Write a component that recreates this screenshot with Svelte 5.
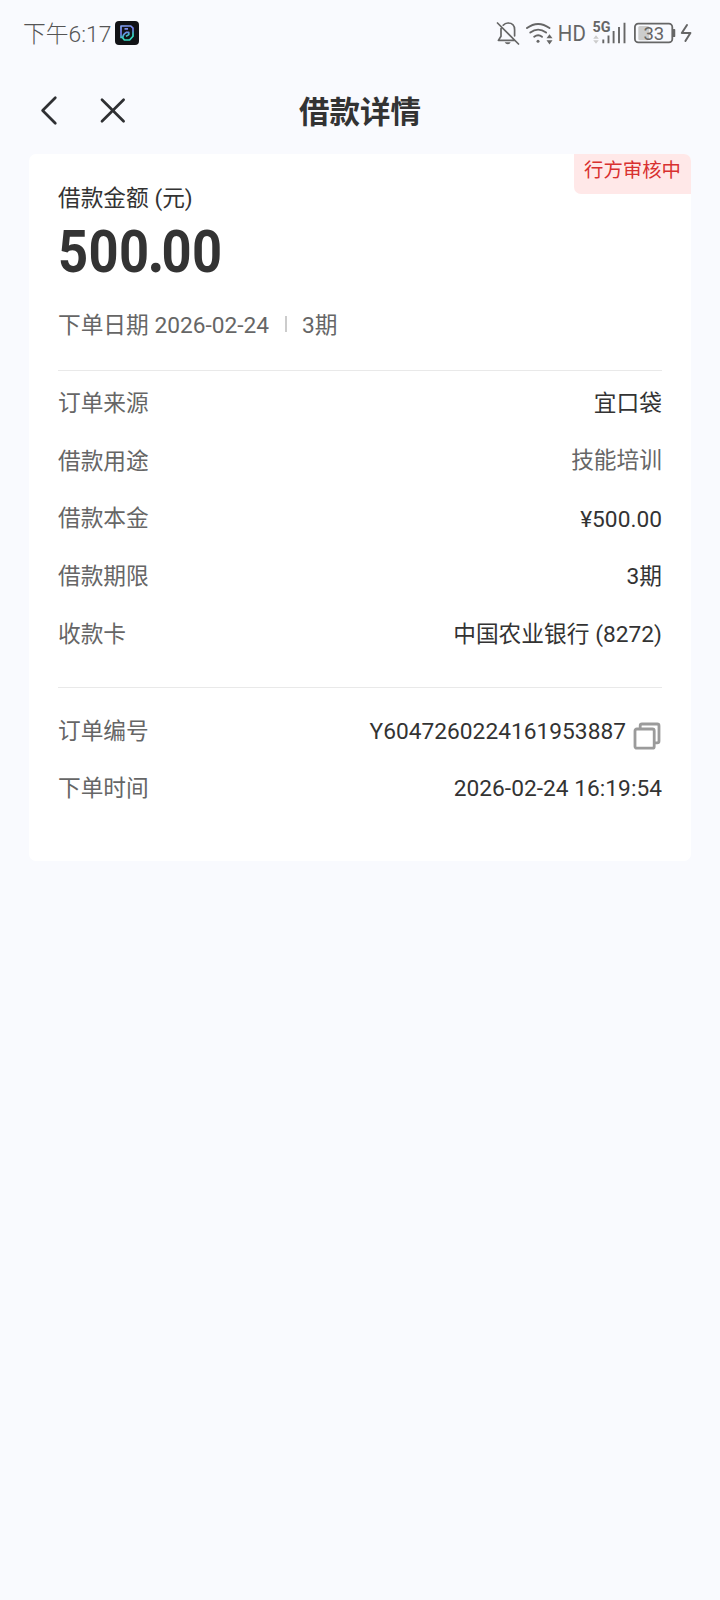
<script>
  const loan = [
    { label: '订单来源', value: '宜口袋' },
    { label: '借款用途', value: '技能培训', muted: true },
    { label: '借款本金', value: '¥500.00' },
    { label: '借款期限', value: '3期' },
    { label: '收款卡', value: '中国农业银行 (8272)' }
  ];
  const order = [
    { label: '订单编号', value: 'Y6047260224161953887', copy: true },
    { label: '下单时间', value: '2026-02-24 16:19:54' }
  ];
</script>

{#snippet row(item)}
  <div class="row">
    <span class="label">{item.label}</span>
    <span class="value" class:muted={item.muted}>
      <span>{item.value}</span>
      {#if item.copy}
        <svg class="copy" width="28" height="28" viewBox="0 0 28 28" fill="none" stroke="#9b9b9b" stroke-width="2.8">
          <rect x="2" y="7" width="19.2" height="19.2" rx="1.8" />
          <path d="M7.2 7V3.8A1.8 1.8 0 0 1 9 2h15.2A1.8 1.8 0 0 1 26 3.8V19a1.8 1.8 0 0 1-1.8 1.8h-3" />
        </svg>
      {/if}
    </span>
  </div>
{/snippet}

<div class="screen">
  <div class="status">
    <span class="clock">下午6:17</span>
    <svg class="app" width="24" height="24" viewBox="0 0 24 24">
      <defs>
        <linearGradient id="glow" x1="0" y1="0" x2="0.3" y2="1">
          <stop offset="0" stop-color="#84a4f4" />
          <stop offset="0.5" stop-color="#727de8" />
          <stop offset="0.85" stop-color="#35d9c0" />
        </linearGradient>
      </defs>
      <rect width="24" height="24" rx="4" fill="#121316" />
      <path d="M7.4 16.4H6V5h9.8l2.2 2.2v8L14.6 19H9.4l-1.6-2q0-3.8 3.4-5.6h2.6v2.2L11 15.4M9.5 7.8H13" fill="none" stroke="url(#glow)" stroke-width="1.7" stroke-linejoin="round" />
    </svg>
    <svg class="system" width="200" height="32" viewBox="0 -2 200 32" fill="none" stroke="#666" stroke-width="1.7" stroke-linecap="round" stroke-linejoin="round">
      <path d="M1.5 3 22.5 24M7.2 5.2Q9 3 12 3c4.2 0 6.6 2.8 6.6 6.8v6M5 8.5v7.8L2.4 20.4H18" />
      <path d="M8.7 22.3h6q-1 2-3 2t-3-2z" fill="#666" stroke="none" />
      <path d="M31 8.1q11-8.2 22.5 0M34.3 12.6q7.8-6 15.8 0M38.2 16.8q4-3 7.8 0" stroke-width="1.9" />
      <circle cx="42" cy="21.2" r="1.5" fill="#666" stroke="none" />
      <path d="M53.5 14.2 56.5 18.2h-6zM53.5 24.4 56.5 20.2h-6z" fill="#666" stroke="none" />
      <text class="hd" x="61.8" y="21" textLength="28" lengthAdjust="spacingAndGlyphs">HD</text>
      <text class="net" x="96.5" y="12" textLength="18" lengthAdjust="spacingAndGlyphs">5G</text>
      <path d="M100 15.2l2.8 3.6h-5.6zM100 23.8l2.8-3.6h-5.6z" fill="#ccc" stroke="none" />
      <path d="M107.3 19.5v3.8M112.5 15.5v7.8M117.6 11v12.3M123 7v16.3M128.5 2.7v20.6" stroke-width="1.9" stroke-linecap="butt" />
      <rect x="142.3" y="6" width="11" height="14.2" rx="1.5" fill="#ccc" stroke="none" />
      <rect x="138.9" y="3.7" width="37.4" height="18.6" rx="3.4" stroke-width="1.8" />
      <path d="M177.5 9.8h.9v6.4h-.9z" fill="#666" />
      <text class="charge" x="157.8" y="19.6" text-anchor="middle">33</text>
      <path d="M191 5 185.8 13h8.6L189.4 21" stroke-width="2" />
    </svg>
  </div>

  <header>
    <svg width="90" height="32" viewBox="0 0 90 32" fill="none" stroke="#2f3033" stroke-width="2.7" stroke-linecap="round" stroke-linejoin="round">
      <path d="M16.3 2.8 3.6 15.5 16.3 28.2M63 4.7 84.6 26.3M84.6 4.7 63 26.3" />
    </svg>
    <h1>借款详情</h1>
  </header>

  <main>
    <div class="badge">行方审核中</div>
    <div class="caption">借款金额 (元)</div>
    <div class="amount"><span>500<b>.</b>00</span></div>
    <div class="meta"><span>下单日期 2026-02-24</span><i></i><span>3期</span></div>
    <section class="loan">
      {#each loan as item}{@render row(item)}{/each}
    </section>
    <section class="order">
      {#each order as item}{@render row(item)}{/each}
    </section>
  </main>
</div>

<style>
  :global(body) { background: #f9fafe; }
  .screen {
    width: 720px;
    height: 1600px;
    background: #f9fafe;
    font-family: Roboto, "Noto Sans CJK SC", sans-serif;
    color: #333;
    overflow: hidden;
  }
  .status {
    display: flex;
    align-items: center;
    height: 68px;
    padding: 0 24px 0 23px;
  }
  .clock {
    width: 92px;
    margin-top: 2px;
    font: 300 22.8px/30px Roboto, "Noto Sans CJK SC", sans-serif;
    color: #555;
    white-space: nowrap;
  }
  .app { margin-top: -2px; }
  .system { margin-left: auto; overflow: visible; }
  .system text { font-family: Roboto, sans-serif; fill: #666; stroke: none; }
  .system .hd { font-size: 22px; font-weight: 400; }
  .system .net { font-size: 14.6px; font-weight: 700; }
  .system .charge { font-size: 18.5px; }
  header {
    display: grid;
    grid-template-columns: 90px 1fr 90px;
    align-items: center;
    height: 86px;
    padding: 0 39px;
    box-sizing: border-box;
  }
  h1 {
    margin: -2px 0 0;
    text-align: center;
    font: 700 30.5px/40px "Noto Sans CJK SC", sans-serif;
  }
  main {
    position: relative;
    box-sizing: border-box;
    width: 662px;
    height: 707px;
    margin-left: 29px;
    padding: 29px 29px 0;
    border-radius: 7px;
    background: #fff;
    font-size: 22.7px;
  }
  .badge {
    position: absolute;
    top: 0;
    right: 0;
    box-sizing: border-box;
    width: 117px;
    height: 40px;
    border-radius: 0 7px 0 7px;
    background: #ffe8e8;
    color: #d8302f;
    font-size: 19.4px;
    line-height: 33px;
    text-align: center;
  }
  .caption { height: 32px; line-height: 32px; }
  .amount { height: 72px; line-height: 73px; font-size: 60px; font-weight: 700; }
  .amount span {
    display: inline-block;
    letter-spacing: .4px;
    transform: scaleX(.875);
    transform-origin: left;
  }
  .amount b { margin: 0 -3.2px 0 -1.6px; }
  .meta {
    display: flex;
    align-items: center;
    height: 32px;
    margin-top: 20px;
    padding-bottom: 31px;
    color: #666;
  }
  .meta span { white-space: nowrap; }
  .meta i { width: 2px; height: 16px; margin: 2px 15px 0 16px; background: #ccc; }
  section { border-top: 1px solid #e9e9e9; }
  .loan { height: 317px; padding-top: 4px; box-sizing: border-box; }
  .order { padding-top: 15px; }
  .row {
    display: flex;
    justify-content: space-between;
    height: 57.75px;
    line-height: 57.75px;
  }
  .loan .row:nth-child(2) { height: 57px; }
  .loan .row:nth-child(3) { height: 58.5px; line-height: 57px; }
  .order .row { height: 57px; }
  .label, .muted { color: #666; }
  .value:not(.muted) { color: #333; }
  .value { display: flex; align-items: center; letter-spacing: .03px; }
  .copy { margin: 8px 1px 0 7px; }
</style>
